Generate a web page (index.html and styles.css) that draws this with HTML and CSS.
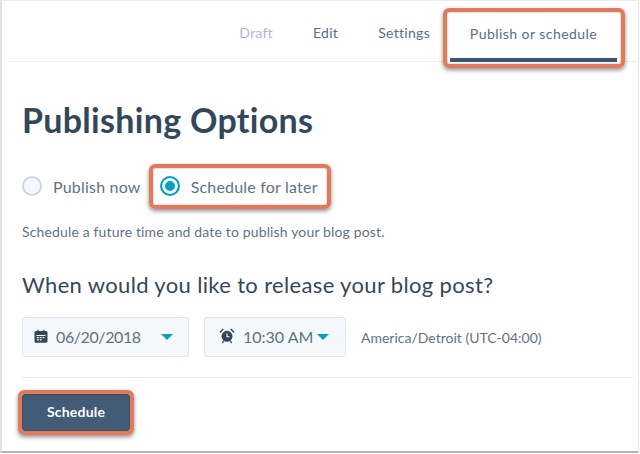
FILE: index.html
```html
<!DOCTYPE html>
<html lang="en">
<head>
<meta charset="utf-8">
<title>Publishing Options</title>
<link rel="stylesheet" href="styles.css">
</head>
<body>
<main class="window">
  <nav class="tabs">
    <span class="tab tab-muted">Draft</span>
    <span class="tab">Edit</span>
    <span class="tab">Settings</span>
    <span class="tab tab-active">Publish or schedule<span class="callout callout-tab"></span></span>
  </nav>
  <section class="content">
    <h1 class="title">Publishing Options</h1>
    <div class="radios">
      <label class="radio"><span class="dot"></span>Publish now</label>
      <label class="radio radio-on"><span class="dot dot-on"></span>Schedule for later<span class="callout callout-radio"></span></label>
    </div>
    <p class="desc">Schedule a future time and date to publish your blog post.</p>
    <h2 class="question">When would you like to release your blog post?</h2>
    <div class="fields">
      <div class="field field-date">
        <svg class="icon" viewBox="0 0 14 14" width="14" height="14"><path fill="#33475b" d="M2 2h1.5V.8h1.3V2h4.4V.8h1.3V2H12a1.5 1.5 0 0 1 1.5 1.5v8.7A1.5 1.5 0 0 1 12 13.700H2a1.5 1.500 0 0 1-1.500-1.500V3.500A1.500 1.500 0 0 1 2 2z"/><path fill="#f5f8fa" d="M2.500 6h9v1h-9zM3 8h1.800v1.300H3zM5.800 8h1.800v1.300H5.800zM8.600 8h1.800v1.300H8.600zM3 10.200h1.800v1.300H3zM5.800 10.200h1.800v1.300H5.800z"/></svg>
        <span class="value value-date">06/20/2018</span>
        <span class="caret caret-date"></span>
      </div>
      <div class="field field-time">
        <svg class="icon icon-clock" viewBox="0 0 16 16" width="16" height="16"><circle cx="8" cy="8.300" r="5.500" fill="#33475b"/><path d="M8 5.200v3.500h2.500" fill="none" stroke="#f5f8fa" stroke-width="1.100"/><path fill="#33475b" d="M.4 4 3.800.6l1 1L1.400 5zM15.600 4 12.200.6l-1 1L14.600 5zM2.800 14.800l1.300-2 1 .7-1.300 2zM13.200 14.800l-1.300-2-1 .7 1.300 2z"/></svg>
        <span class="value">10:30 AM</span>
        <span class="caret"></span>
      </div>
      <span class="zone">America/Detroit (UTC-04:00)</span>
    </div>
    <hr class="rule">
    <button class="primary" type="button"><span class="primary-label">Schedule</span><span class="callout callout-btn"></span></button>
  </section>
</main>
</body>
</html>
```
FILE: styles.css
```css
* { box-sizing: border-box; }
html, body { margin: 0; height: 100%; }
body {
  background: #fff;
  font-family: Lato, "Liberation Sans", sans-serif;
  color: #33475b;
  overflow: hidden;
}
.window {
  width: 639px;
  height: 453px;
  border-top: 1px solid #ececec;
  border-left: 2px solid #e2e2e2;
  border-right: 1px solid #e4e4e4;
  border-bottom: 2px solid #b4b4b4;
  background: #fff;
}
.tabs {
  display: flex;
  justify-content: flex-end;
  align-items: stretch;
  height: 61px;
  margin-left: 6px;
  margin-right: -1px;
  padding-right: 22px;
  border-bottom: 1px solid #eaf0f6;
}
.tab {
  position: relative;
  display: flex;
  align-items: center;
  padding: 3px 20px 0;
  font-size: 14px;
  letter-spacing: .3px;
  color: #516f90;
}
.tab-muted { color: #a9bbcd; }
.tab-active {
  width: 167px;
  justify-content: center;
  padding: 7px 0 0;
  letter-spacing: .45px;
  border-bottom: 4px solid #3b5570;
  height: 61px;
}
.callout {
  position: absolute;
  border: 4px solid #e07a5a;
  border-radius: 6px;
  box-shadow: 0 2px 4px rgba(0,0,0,.45), inset 0 0 2px rgba(0,0,0,.4);
  pointer-events: none;
}
.callout-tab { left: -7px; right: -8px; top: 7px; bottom: -10px; }
.content { padding: 0 5px 0 20px; }
.title {
  margin: 39px 0 0;
  font-size: 34px;
  line-height: 38px;
  font-weight: 700;
  letter-spacing: .3px;
  color: #33475b;
}
.radios { display: flex; align-items: center; margin-top: 27px; height: 40px; }
.radio {
  position: relative;
  display: flex;
  align-items: center;
  gap: 11px;
  font-size: 16px;
  letter-spacing: .2px;
  color: #5f7284;
  margin-right: 19px;
}
.dot {
  width: 20px;
  height: 20px;
  border-radius: 50%;
  border: 2px solid #cbd6e2;
  background: #f5f8fa;
}
.dot-on {
  border-color: #00a4bd;
  background: #00a4bd;
  box-shadow: inset 0 0 0 3px #fff;
}
.callout-radio { left: -11px; right: -13px; top: -12px; bottom: -13px; }
.desc {
  margin: 16px 0 0;
  font-size: 14px;
  line-height: 20px;
  letter-spacing: .15px;
  color: #5f7284;
}
.question {
  margin: 29px 0 0;
  font-size: 22px;
  line-height: 28px;
  font-weight: 400;
  letter-spacing: .35px;
  color: #33475b;
}
.fields { display: flex; align-items: center; margin-top: 18px; }
.field {
  display: flex;
  align-items: center;
  height: 40px;
  padding-bottom: 2px;
  border: 1px solid #dfe3eb;
  border-radius: 3px;
  background: #f5f8fa;
  font-size: 16px;
  color: #5f7284;
}
.field-date { width: 167px; padding-left: 11px; margin-right: 15px; }
.field-time { width: 142px; padding-left: 14px; margin-right: 15px; }
.icon { flex: none; }
.value-date { margin-left: 8px; letter-spacing: -.4px; }
.field-time .value { margin-left: 8px; }
.caret {
  width: 0;
  height: 0;
  margin-left: 4px;
  margin-top: 1px;
  border-left: 6px solid transparent;
  border-right: 6px solid transparent;
  border-top: 6px solid #00a4bd;
}
.caret-date { margin-left: 20px; }
.zone { font-size: 14px; color: #5f7284; }
.rule { margin: 20px 0 0; border: 0; height: 1px; background: #e4eaf0; }
.primary {
  position: relative;
  display: block;
  width: 108px;
  height: 37px;
  margin: 16px 0 0;
  padding: 0 0 2px;
  border: 0;
  border-radius: 3px;
  background: #425b76;
  color: #fff;
  font: 700 14px Lato, "Liberation Sans", sans-serif;
  letter-spacing: .2px;
}
.callout-btn { left: -4px; right: -4px; top: -4px; bottom: -4px; }
```
